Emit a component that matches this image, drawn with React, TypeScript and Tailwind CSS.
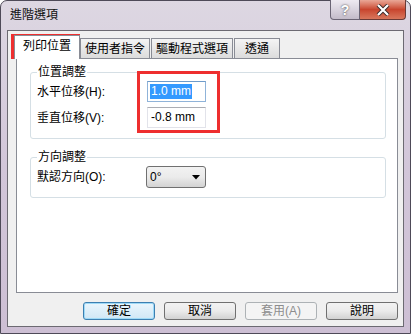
const font = "font-['Liberation_Sans','Noto_Sans_CJK_TC',sans-serif]";

const Tab = ({ label, w, selected }: { label: string; w: string; selected?: boolean }) => (
  <div
    className={
      selected
        ? `relative z-10 ${w} h-[24px] -mb-px bg-white border border-b-0 border-[#898c95] flex items-start justify-center pt-[2px] text-[12px] leading-[16px]`
        : `${w} h-[20px] bg-gradient-to-b from-[#f4f4f4] to-[#dcdcdc] border border-b-0 border-[#898c95] flex items-center justify-center text-[12px] leading-[16px]`
    }
  >
    {label}
  </div>
);

const Button = ({ label, primary, disabled }: { label: string; primary?: boolean; disabled?: boolean }) => {
  let cls =
    "w-[72px] h-[18px] rounded-[3px] border flex items-center justify-center text-[12px] leading-[14px] ";
  if (disabled) cls += "border-[#adb2b5] bg-[#f4f4f4] text-[#8d8d8d]";
  else if (primary)
    cls +=
      "border-[#3c7fb1] bg-gradient-to-b from-[#eaf6fd] to-[#d0e7f5] shadow-[inset_0_0_0_1px_#9fdaf7] text-black";
  else cls += "border-[#707070] bg-gradient-to-b from-[#f2f2f2] via-[#ebebeb] to-[#d2d2d2] text-black";
  return <div className={cls}>{label}</div>;
};

export default function App() {
  return (
    <div className={`relative w-[415px] h-[335px] bg-white text-black ${font}`}>
      <div className="w-[411px] h-[334px] rounded-t-[7px] border border-[#4e4a58] bg-gradient-to-b from-[#ddd7e2] via-[#d2c6d9] to-[#cdbfd4] px-[6px] pb-[6px] flex flex-col">
        {/* title bar */}
        <div className="h-[29px] flex items-start justify-between">
          <span className="pl-[3px] pt-[6px] text-[12px] leading-[16px] text-[#111]">進階選項</span>
          <div className="flex -mt-px -mr-[2px]">
            <div className="w-[30px] h-[20px] rounded-bl-[4px] border border-t-0 border-[#6a6474] bg-gradient-to-b from-[#eeeaf1] via-[#d9d3de] to-[#c3bbc9] flex items-center justify-center text-[14px] font-bold leading-none text-white [text-shadow:0_0_2px_#333]">
              ?
            </div>
            <div className="w-[46px] h-[20px] rounded-br-[4px] border border-l-0 border-t-0 border-[#6b3a36] bg-gradient-to-b from-[#e9a797] via-[#c8452e] to-[#d8765c] flex items-center justify-center">
              <svg width="14" height="12" viewBox="0 0 14 12">
                <path d="M2 1 L12 11 M12 1 L2 11" stroke="#3a2a2a" strokeWidth="4" />
                <path d="M2 1 L12 11 M12 1 L2 11" stroke="#ffffff" strokeWidth="2.2" />
              </svg>
            </div>
          </div>
        </div>

        {/* client area */}
        <div className="flex-1 bg-[#f0f0f0] border border-[#6c6a72] flex flex-col">
          <div className="h-[27px] pl-[6px] flex items-end">
            <Tab label="列印位置" w="w-[66px]" selected />
            <Tab label="使用者指令" w="w-[70px]" />
            <div className="w-px" />
            <Tab label="驅動程式選項" w="w-[82px]" />
            <div className="w-px" />
            <Tab label="透通" w="w-[46px]" />
          </div>

          <div className="ml-[8px] w-[382px] h-[235px] bg-white border border-[#898c95] px-[13px] pt-[6px] flex flex-col">
            <fieldset className="w-[356px] border border-[#d5dfe5] rounded-[3px] pl-[6px] pb-[10px]">
              <legend className="px-[1px] text-[12px] leading-[14px]">位置調整</legend>
              <div className="flex flex-col gap-[5px] pt-[2px]">
                <div className="flex items-center">
                  <span className="w-[110px] text-[12px] leading-[16px]">水平位移(H):</span>
                  <div className="w-[59px] h-[21px] border border-[#8fb3d9] border-t-[#6f9bc9] bg-white flex items-center pl-[2px]">
                    <span className="bg-[#3399ff] text-white text-[12px] leading-[15px] px-[1px]">1.0 mm</span>
                  </div>
                </div>
                <div className="flex items-center">
                  <span className="w-[110px] text-[12px] leading-[16px]">垂直位移(V):</span>
                  <div className="w-[59px] h-[21px] border border-[#e2e3ea] border-t-[#abadb3] bg-white flex items-center pl-[3px]">
                    <span className="text-[12px] leading-[15px]">-0.8 mm</span>
                  </div>
                </div>
              </div>
            </fieldset>

            <fieldset className="mt-[11px] w-[356px] border border-[#d5dfe5] rounded-[3px] pl-[6px] pb-[9px]">
              <legend className="px-[1px] text-[12px] leading-[14px]">方向調整</legend>
              <div className="flex items-center pt-[2px]">
                <span className="w-[109px] text-[12px] leading-[16px]">默認方向(O):</span>
                <div className="w-[60px] h-[22px] rounded-[3px] border border-[#707070] bg-gradient-to-b from-[#f2f2f2] via-[#ebebeb] to-[#d3d3d3] flex items-center justify-between pl-[3px] pr-[5px]">
                  <span className="text-[12px] leading-[15px]">0°</span>
                  <svg width="8" height="5" viewBox="0 0 8 5">
                    <path d="M0 0 H8 L4 4.5 Z" fill="#000" />
                  </svg>
                </div>
              </div>
            </fieldset>
          </div>

          <div className="mt-[9px] pr-[5px] flex justify-end gap-[9px]">
            <Button label="確定" primary />
            <Button label="取消" />
            <Button label="套用(A)" disabled />
            <Button label="說明" />
          </div>
        </div>
      </div>

      {/* annotation boxes */}
      <div className="absolute left-[11px] top-[34px] w-[69px] h-[25px] border-[3px] border-[#ee2f2f]" />
      <div className="absolute left-[137px] top-[71px] w-[83px] h-[62px] border-[3px] border-[#ee2f2f]" />
    </div>
  );
}
